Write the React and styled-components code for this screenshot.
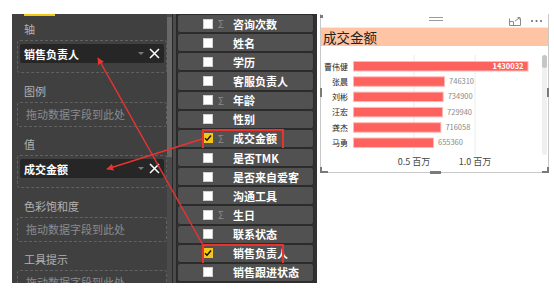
import React from "react"
import styled, { createGlobalStyle } from "styled-components"

const GlobalStyle = createGlobalStyle`
  body {
    margin: 0;
    background: #fff;
    font-family: "Noto Sans CJK SC", "Noto Sans", sans-serif;
  }
`

const Page = styled.div`
  position: relative;
  width: 554px;
  height: 296px;
  box-sizing: border-box;
  padding: 14px 0 0 12px;
  display: flex;
  align-items: flex-start;
  overflow: hidden;
`

const FieldsPane = styled.div`
  width: 160px;
  height: 269px;
  display: flex;
  background: #404040;
  overflow: hidden;
`

const PaneBody = styled.div`
  width: 155px;
`

const TabLine = styled.div`
  margin-left: 12px;
  width: 31px;
  height: 2px;
  background: #f2c811;
`

const WellLabel = styled.div`
  margin: ${({ first }) => (first ? "6px" : "0")} 0 4px 12px;
  height: 14px;
  font-size: 11px;
  line-height: 14px;
  color: #b2b2b2;
`

const Well = styled.div`
  box-sizing: border-box;
  margin: 0 0 10.5px 5px;
  width: 150px;
  height: ${({ h }) => h}px;
  border: 1px dashed #616161;
  border-radius: 3px;
  padding: 3px 2px;
`

const Placeholder = styled.div`
  margin-top: -3px;
  padding-left: 6px;
  font-size: 11px;
  line-height: 23px;
  color: #8b8b8b;
  white-space: nowrap;
`

const Pill = styled.div`
  height: 19px;
  display: flex;
  align-items: center;
  padding-left: 4px;
  background: #262626;
  border-radius: 2px;
  color: #fff;
  font-size: 11px;
  font-weight: 700;
`

const PillName = styled.span`
  flex: 1;
`

const Caret = styled.span`
  width: 0;
  height: 0;
  margin-right: 5px;
  border-left: 3px solid transparent;
  border-right: 3px solid transparent;
  border-top: 3px solid #7a7a7a;
`

const RemoveIcon = styled.svg`
  width: 11px;
  height: 11px;
  margin-right: 4px;
`

const Scroll = styled.div`
  width: 5px;
  height: 100%;
  background: #4b4b4b;
`

const ScrollThumb = styled.div`
  margin-top: 3px;
  height: 140px;
  background: #686868;
`

const Splitter = styled.div`
  box-sizing: border-box;
  width: 5px;
  height: 269px;
  background: #4c4c4c;
  border-left: 1px solid #292929;
  border-right: 1px solid #292929;
`

const FieldList = styled.div`
  width: 140px;
  height: 269px;
  padding-right: 3px;
  box-sizing: border-box;
  background: #313131;
  overflow: hidden;
`

const FieldRow = styled.div`
  position: relative;
  box-sizing: border-box;
  height: 19.15px;
  display: flex;
  align-items: center;
  background: #515151;
  border: 1px solid #2b2b2b;
  border-radius: 3px;
  color: #fff;
  font-size: 11px;
  font-weight: 600;
  white-space: nowrap;

  ${({ marked }) =>
    marked &&
    `
    &::after {
      content: "";
      position: absolute;
      left: 24px;
      top: -1px;
      width: 82px;
      height: 22px;
      box-sizing: border-box;
      border: 2px solid #e8332f;
    }
  `}
`

const Check = styled.span`
  box-sizing: border-box;
  margin-left: 25px;
  width: 10px;
  height: 10px;
  display: flex;
  align-items: center;
  justify-content: center;
  background: ${({ on }) => (on ? "#f5c518" : "#fff")};
  border: 1px solid ${({ on }) => (on ? "#f5c518" : "#d0d0d0")};
`

const Sigma = styled.span`
  width: 15px;
  padding-left: 5px;
  font-size: 10px;
  font-weight: 400;
  color: #8c8c8c;
`

const Visual = styled.div`
  position: relative;
  margin-left: 3px;
  width: 229px;
  height: 159px;
  box-sizing: border-box;
  border: 1px solid #c9c9c9;
  border-top: none;
  background: #fff;
`

const VisualHeader = styled.div`
  height: 13px;
  display: flex;
  align-items: center;
  justify-content: flex-end;
  border-bottom: 1px solid #ececec;
`

const DragHandle = styled.svg`
  position: absolute;
  left: 107px;
  top: 1px;
`

const HeaderIcons = styled.svg`
  margin-right: 2px;
`

const TitleBar = styled.div`
  height: 18px;
  padding-left: 2px;
  background: #ffc4a3;
  color: #222;
  font-size: 13.5px;
  line-height: 18px;
`

const Handle = styled.span`
  position: absolute;
  background: #7a7a7a;
  ${({ pos }) => pos}
`

const Overlay = styled.svg`
  position: absolute;
  left: 0;
  top: 0;
  pointer-events: none;
`

const fields = [
  { name: "咨询次数", sum: true },
  { name: "姓名" },
  { name: "学历" },
  { name: "客服负责人" },
  { name: "年龄", sum: true },
  { name: "性别" },
  { name: "成交金额", sum: true, on: true },
  { name: "是否TMK" },
  { name: "是否来自爱客" },
  { name: "沟通工具" },
  { name: "生日", sum: true },
  { name: "联系状态" },
  { name: "销售负责人", on: true },
  { name: "销售跟进状态" },
]

const sales = [
  ["曹伟健", 1430032],
  ["张晨", 746310],
  ["刘彬", 734900],
  ["汪宏", 729940],
  ["龚杰", 716058],
  ["马勇", 655360],
]

const Remove = () => (
  <RemoveIcon viewBox="0 0 11 11">
    <path d="M1 1 L10 10 M10 1 L1 10" stroke="#fff" strokeWidth="1.5" />
  </RemoveIcon>
)

const FieldChip = ({ name }) => (
  <Pill>
    <PillName>{name}</PillName>
    <Caret />
    <Remove />
  </Pill>
)

const Chart = () => {
  const scale = 174.5 / 1430032
  return (
    <svg width="227" height="126" viewBox="0 0 227 126">
      <line x1="93" y1="9" x2="93" y2="110" stroke="#ececec" />
      <line x1="154" y1="9" x2="154" y2="110" stroke="#ececec" />
      {sales.map(([who, v], i) => {
        const y = 15 + i * 15.3
        const w = v * scale
        return (
          <g key={who}>
            <text x="27" y={y + 8.5} textAnchor="end" fontSize="8" fill="#222">
              {who}
            </text>
            <rect x="32.5" y={y + 0.5} width={w} height="9.5" fill="#fd625e" stroke="#ffb9b7" strokeWidth="1" />
            {i === 0 ? (
              <text x={32 + w - 4} y={y + 7.8} textAnchor="end" fontSize="7.5" fontWeight="700" fill="#fff">
                {v}
              </text>
            ) : (
              <text x={32 + w + 5} y={y + 7.8} fontSize="7.5" fill="#8a8a8a">
                {v}
              </text>
            )}
          </g>
        )
      })}
      <text x="93" y="119" textAnchor="middle" fontSize="9" fill="#444">0.5 百万</text>
      <text x="154" y="119" textAnchor="middle" fontSize="9" fill="#444">1.0 百万</text>
      <rect x="221" y="9" width="5" height="100" rx="2.5" fill="#f0f0f0" />
      <rect x="221" y="9" width="5" height="13" rx="2.5" fill="#c6c6c6" />
    </svg>
  )
}

const App = () => (
  <Page>
    <GlobalStyle />
    <FieldsPane>
      <PaneBody>
        <TabLine />
        <WellLabel first>轴</WellLabel>
        <Well h={33}>
          <FieldChip name="销售负责人" />
        </Well>
        <WellLabel>图例</WellLabel>
        <Well h={25}>
          <Placeholder>拖动数据字段到此处</Placeholder>
        </Well>
        <WellLabel>值</WellLabel>
        <Well h={33}>
          <FieldChip name="成交金额" />
        </Well>
        <WellLabel>色彩饱和度</WellLabel>
        <Well h={25}>
          <Placeholder>拖动数据字段到此处</Placeholder>
        </Well>
        <WellLabel>工具提示</WellLabel>
        <Well h={25}>
          <Placeholder>拖动数据字段到此处</Placeholder>
        </Well>
      </PaneBody>
      <Scroll>
        <ScrollThumb />
      </Scroll>
    </FieldsPane>
    <Splitter />
    <FieldList>
      {fields.map((f) => (
        <FieldRow key={f.name} marked={f.on}>
          <Check on={f.on}>
            {f.on && (
              <svg width="8" height="8" viewBox="0 0 8 8">
                <path d="M1 4.2 L3 6.3 L7 1.5" stroke="#111" strokeWidth="1.4" fill="none" />
              </svg>
            )}
          </Check>
          <Sigma>{f.sum ? "Σ" : ""}</Sigma>
          {f.name}
        </FieldRow>
      ))}
    </FieldList>
    <Visual>
      <VisualHeader>
        <DragHandle width="16" height="8" viewBox="0 0 16 8">
          <path d="M1 2.5 H15 M1 5.5 H15" stroke="#9a9a9a" strokeWidth="1" />
        </DragHandle>
        <HeaderIcons width="40" height="10" viewBox="0 0 40 10">
          <path d="M3.5 2.5 V9.5 H14.5 V2.5 M3.5 5.5 H7.5 V9.5 M9 5 L14 1.5 M11.5 1.5 H14 V4" stroke="#8a8a8a" strokeWidth="1" fill="none" />
          <circle cx="26" cy="5" r="1" fill="#666" />
          <circle cx="30.5" cy="5" r="1" fill="#666" />
          <circle cx="35" cy="5" r="1" fill="#666" />
        </HeaderIcons>
      </VisualHeader>
      <TitleBar>成交金额</TitleBar>
      <Chart />
      <Handle pos="left:-1px;top:1px;width:3px;height:3px;" />
      <Handle pos="left:-1px;top:74px;width:2px;height:9px;" />
      <Handle pos="right:-1px;top:74px;width:2px;height:9px;" />
      <Handle pos="left:-1px;bottom:-1px;width:8px;height:2px;" />
      <Handle pos="left:-1px;bottom:-1px;width:2px;height:6px;" />
      <Handle pos="right:-1px;bottom:-1px;width:7px;height:2px;" />
      <Handle pos="right:-1px;bottom:-1px;width:2px;height:6px;" />
      <Handle pos="left:109px;bottom:-2px;width:11px;height:3px;" />
    </Visual>
    <Overlay width="554" height="296" viewBox="0 0 554 296">
      <defs>
        <marker id="head" viewBox="0 0 10 10" refX="9" refY="5" markerWidth="7" markerHeight="7" orient="auto-start-reverse" markerUnits="userSpaceOnUse">
          <path d="M0 0 L10 5 L0 10 Z" fill="#e8332f" />
        </marker>
      </defs>
      <line x1="204" y1="247" x2="98" y2="58" stroke="#e8332f" strokeWidth="1.5" markerEnd="url(#head)" />
      <line x1="202" y1="139" x2="107" y2="169" stroke="#e8332f" strokeWidth="1.5" markerEnd="url(#head)" />
    </Overlay>
  </Page>
)

export default App
